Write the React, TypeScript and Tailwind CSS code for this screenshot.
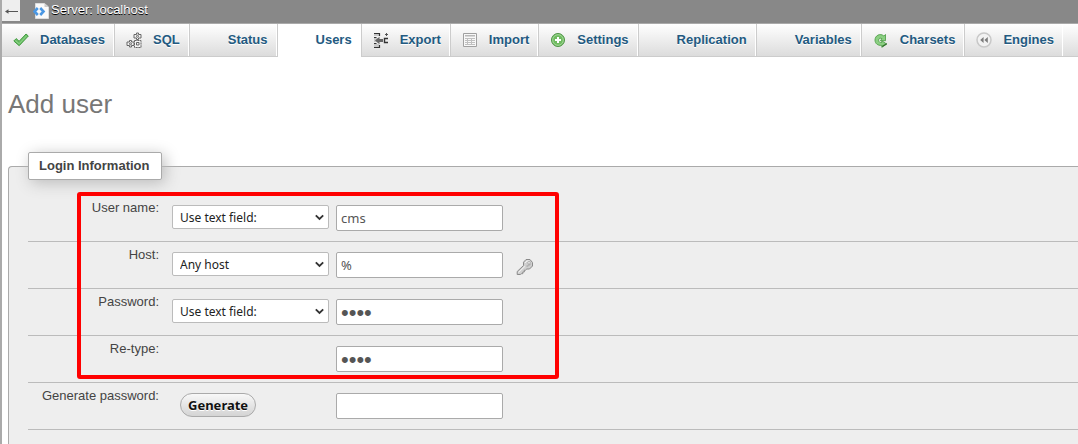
import type { ReactNode } from "react";

const CheckIcon = () => (
  <svg width="16" height="16" viewBox="0 0 16 16" aria-hidden="true">
    <path d="M.8 9 3.200 6.600l2.900 2.700L13 2l2.300 2L6.200 13.700z" fill="#6cc067" stroke="#459b43" strokeWidth="1" strokeLinejoin="round" />
    <path d="M2.400 8.600l3.700 3.200L13.400 4" fill="none" stroke="#8fd58a" strokeWidth="1" />
  </svg>
);

const NodesIcon = () => (
  <svg width="16" height="16" viewBox="0 0 16 16" aria-hidden="true" fill="#f4f4f4" stroke="#666" strokeWidth="1">
    <path d="M10.500 1h2v1.500h2.500v3.500h-2.500v1.500h-2V6H8V2.500h2.500z" strokeLinejoin="round" />
    <circle cx="11.500" cy="4.300" r="1" />
    <path d="M3.500 8.500h2V10H8v3.500H5.500V15h-2v-1.500H1V10h2.500z" strokeLinejoin="round" />
    <circle cx="4.500" cy="11.800" r="1" />
    <path d="M8.500 8.500h6.500v7H8.500z" strokeDasharray="2.200 .6" />
    <path d="M10.500 10.500h2.500v2.500h-2.500z" />
  </svg>
);

const ExportIcon = () => (
  <svg width="16" height="16" viewBox="0 0 16 16" aria-hidden="true">
    <path d="M1 1h5v3H1zM1 6h5v4H1zM1 12h5v3H1z" fill="#c8c8c8" />
    <path d="M1 1.500h5.500v2.500M1 15.500h5.500v-2.500M1 5.500h2.500M1 11.500h2.500" fill="none" stroke="#333" strokeWidth="1.200" />
    <path d="M2 8.500 6.500 4.800V7H10v3H6.500v2.200z" fill="#666" />
    <path d="M15 6.500h-3.500v4H15" fill="none" stroke="#333" strokeWidth="1.400" />
    <path d="M13.500 1v3M12 2.500h3" stroke="#555" />
  </svg>
);

const TableIcon = () => (
  <svg width="16" height="16" viewBox="0 0 16 16" aria-hidden="true">
    <path d="M1.500 1.500h13v13h-13z" fill="#f8f8f8" stroke="#a0a0a0" />
    <path d="M3 3h10v1.500H3z" fill="#b8b8b8" />
    <path d="M3 6.500h10M3 8.500h10M3 10.500h10M3 12.500h10M5.500 6v7M9.500 6v7" stroke="#c0c0c0" />
  </svg>
);

const PlusIcon = () => (
  <svg width="16" height="16" viewBox="0 0 16 16" aria-hidden="true">
    <circle cx="8" cy="8" r="6.500" fill="#6fbb60" stroke="#4f9446" />
    <circle cx="8" cy="8" r="5.300" fill="none" stroke="#a3d899" />
    <path d="M8 5v6M5 8h6" stroke="#fff" strokeWidth="2" />
  </svg>
);

const ReloadIcon = () => (
  <svg width="16" height="16" viewBox="0 0 16 16" aria-hidden="true">
    <path
      d="M12.500 2.500v6.200H7.300L9 6.700C7.500 5.500 5.600 6.300 5.600 8.200c0 1.800 1.400 2.600 3.200 2.300V8.700l4.700 3.300-4.700 3.300v-1.900C4.700 13.700 2 11.500 2 8 2 3.600 7 .700 10.900 4z"
      fill="#8bcf82"
      stroke="#55a24e"
      strokeWidth=".9"
      strokeLinejoin="round"
    />
    <path d="M9.200 15.300v-1.600L13.800 11v1.500z" fill="#35722f" />
  </svg>
);

const RewindIcon = () => (
  <svg width="16" height="16" viewBox="0 0 16 16" aria-hidden="true">
    <circle cx="8" cy="8" r="7" fill="#f2f2f2" stroke="#c8c8c8" strokeWidth="1.500" />
    <path d="M7.600 5v6L4.200 8zM11.800 5v6L8.400 8z" fill="#7c7c7c" />
  </svg>
);

const ServerIcon = () => (
  <svg width="16" height="16" viewBox="0 0 16 16" aria-hidden="true">
    <path d="M2.500.5h9L15.500 4v11.500h-13z" fill="#fafafa" stroke="#ddd" />
    <path d="M11.500.5V4h4z" fill="#ccc" />
    <path d="M4.800 5 1.500 8.500 4.800 12M7.200 5l3.300 3.500L7.200 12" fill="none" stroke="#4a97e3" strokeWidth="2.600" />
  </svg>
);

const KeyIcon = () => (
  <svg width="18" height="18" viewBox="0 0 18 18" aria-hidden="true">
    <path
      d="M10 1.500h4L16.500 4.500V8l-3 3h-2.700l-1.300 1.200H8.300V14H6.800v1.700H5.500l-1.200.8H1.200v-3L7.500 7.500V4.200z"
      fill="#cfcfcf"
      stroke="#8a8a8a"
      strokeLinejoin="round"
    />
    <path d="M2.500 14.500 9 8.300M9 5l2-2h2.500" fill="none" stroke="#f2f2f2" />
    <path d="M10.500 8.500 14.500 6" stroke="#b4b4b4" strokeWidth="1.500" />
    <circle cx="13" cy="4.800" r="1.300" fill="#f4f4f4" stroke="#999" strokeWidth=".7" />
  </svg>
);

const tabs: { label: string; icon?: ReactNode; active?: boolean }[] = [
  { label: "Databases", icon: <CheckIcon /> },
  { label: "SQL", icon: <NodesIcon /> },
  { label: "Status" },
  { label: "Users", active: true },
  { label: "Export", icon: <ExportIcon /> },
  { label: "Import", icon: <TableIcon /> },
  { label: "Settings", icon: <PlusIcon /> },
  { label: "Replication" },
  { label: "Variables" },
  { label: "Charsets", icon: <ReloadIcon /> },
  { label: "Engines", icon: <RewindIcon /> },
];

const fieldClass = "h-[26px] w-[167px] rounded-[2px] border border-[#aaa] bg-white px-1 text-[#555] outline-none";
const inputClass = `${fieldClass} font-['Noto_Sans',sans-serif] text-[13px]`;
const passwordClass = `${fieldClass} pt-[2px] font-['Liberation_Sans',sans-serif] text-[22px] leading-[22px]`;

function Select({ id, label, options }: { id: string; label: string; options: string[] }) {
  return (
    <span className="relative block w-[157px]">
      <select
        id={id}
        aria-label={label}
        className="block h-6 w-full appearance-none rounded-[2px] border border-[#bbb] bg-white pt-px pl-[7px] font-['Noto_Sans',sans-serif] text-[12px] leading-[22px] text-[#222] outline-none"
      >
        {options.map((o) => (
          <option key={o}>{o}</option>
        ))}
      </select>
      <svg className="pointer-events-none absolute top-2 right-[5px]" width="9" height="9" viewBox="0 0 9 9" aria-hidden="true">
        <path d="M.8 2.300 4.500 6l3.700-3.700" fill="none" stroke="#333" strokeWidth="1.800" />
      </svg>
    </span>
  );
}

function Row({ label, htmlFor, control, children }: { label: string; htmlFor: string; control?: ReactNode; children: ReactNode }) {
  return (
    <div className="flex items-start border-b border-[#bbb]">
      <label htmlFor={htmlFor} className="w-[131px] shrink-0 pt-1 text-right text-[13px] leading-[18px] text-[#444]">
        {label}
      </label>
      <div className="ml-[13px] w-[164px] shrink-0 pt-[10px]">{control}</div>
      <div className="flex items-center py-[10px]">{children}</div>
    </div>
  );
}

export default function App() {
  return (
    <div className="flex min-h-screen flex-col overflow-hidden border-l-2 border-[#aaa] bg-white font-['Liberation_Sans',Arial,sans-serif] text-[#444]">
      <header className="flex h-6 items-start border-b border-[#aaa] bg-[#888]">
        <button type="button" aria-label="Back" className="flex h-[21px] w-[18px] items-center justify-center bg-[#eee] pt-[2px]">
          <svg width="13" height="7" viewBox="0 0 13 7" aria-hidden="true">
            <path d="M1 3.500h12" stroke="#555" />
            <path d="M0 3.500 3.500 1.200v4.600z" fill="#555" />
          </svg>
        </button>
        <a href="#server" className="ml-[13px] flex items-center gap-[2px] pt-[2px] text-[13px] leading-4 text-white [text-shadow:0_1px_0_#000]">
          <ServerIcon />
          <span className="pb-[2px]">Server: localhost</span>
        </a>
      </header>

      <nav className="flex h-[33px] shrink-0 border-b border-[#ccc] bg-linear-to-b from-white to-[#dcdcdc] whitespace-nowrap">
        {tabs.map((t) => (
          <a
            key={t.label}
            href={`#${t.label.toLowerCase()}`}
            className={
              "flex shrink-0 items-center border-r border-l border-r-white border-l-[#ccc] pr-2 pl-[11px] text-[13px] font-bold text-[#235a81] first:border-l-0 [text-shadow:0_1px_0_#fff] " +
              (t.active ? "-mb-px bg-white pb-px" : "")
            }
          >
            <span className="mr-[11px] flex w-4 shrink-0">{t.icon}</span>
            {t.label}
          </a>
        ))}
      </nav>

      <main className="flex flex-1 flex-col pl-[6px]">
        <h1 className="pt-8 text-[26px] leading-[30px] text-[#777]">Add user</h1>

        <fieldset className="mt-[33px] min-w-0 flex-1 rounded-tl-[4px] border-t border-l border-[#aaa] bg-[#eee] pt-[15px] pl-[19px]">
          <legend className="rounded-[2px] border border-[#aaa] bg-white pr-3 pl-[10px] text-[13px] leading-[26px] font-bold text-[#444] shadow-[3px_3px_15px_#bbb]">
            Login Information
          </legend>

          <div className="relative">
            <Row
              label="User name:"
              htmlFor="username"
              control={<Select id="pred_username" label="User name type" options={["Use text field:", "Any user"]} />}
            >
              <input id="username" type="text" defaultValue="cms" className={inputClass} />
            </Row>
            <Row
              label="Host:"
              htmlFor="hostname"
              control={<Select id="pred_hostname" label="Host type" options={["Any host", "Local", "Use text field:"]} />}
            >
              <input id="hostname" type="text" defaultValue="%" className={inputClass} />
              <span className="-my-1 ml-[13px] pt-1">
                <KeyIcon />
              </span>
            </Row>
            <Row
              label="Password:"
              htmlFor="password"
              control={<Select id="pred_password" label="Password type" options={["Use text field:", "No Password"]} />}
            >
              <input id="password" type="password" defaultValue="pass" className={passwordClass} />
            </Row>
            <Row label="Re-type:" htmlFor="retype">
              <input id="retype" type="password" defaultValue="pass" className={passwordClass} />
            </Row>
            <div className="pointer-events-none absolute -top-[3px] bottom-[4px] left-[49px] w-[482px] rounded-[3px] border-4 border-[#f00]" />
          </div>
          <Row
            label="Generate password:"
            htmlFor="generated"
            control={
              <button
                type="button"
                className="ml-2 block h-6 rounded-full border border-[#aaa] bg-linear-to-b from-[#f8f8f8] to-[#d4d4d4] px-[7px] font-['Noto_Sans',sans-serif] text-[13px] leading-[22px] font-bold text-[#111] [text-shadow:0_1px_0_#fff]"
              >
                Generate
              </button>
            }
          >
            <input id="generated" type="text" className={inputClass} />
          </Row>
        </fieldset>
      </main>
    </div>
  );
}
